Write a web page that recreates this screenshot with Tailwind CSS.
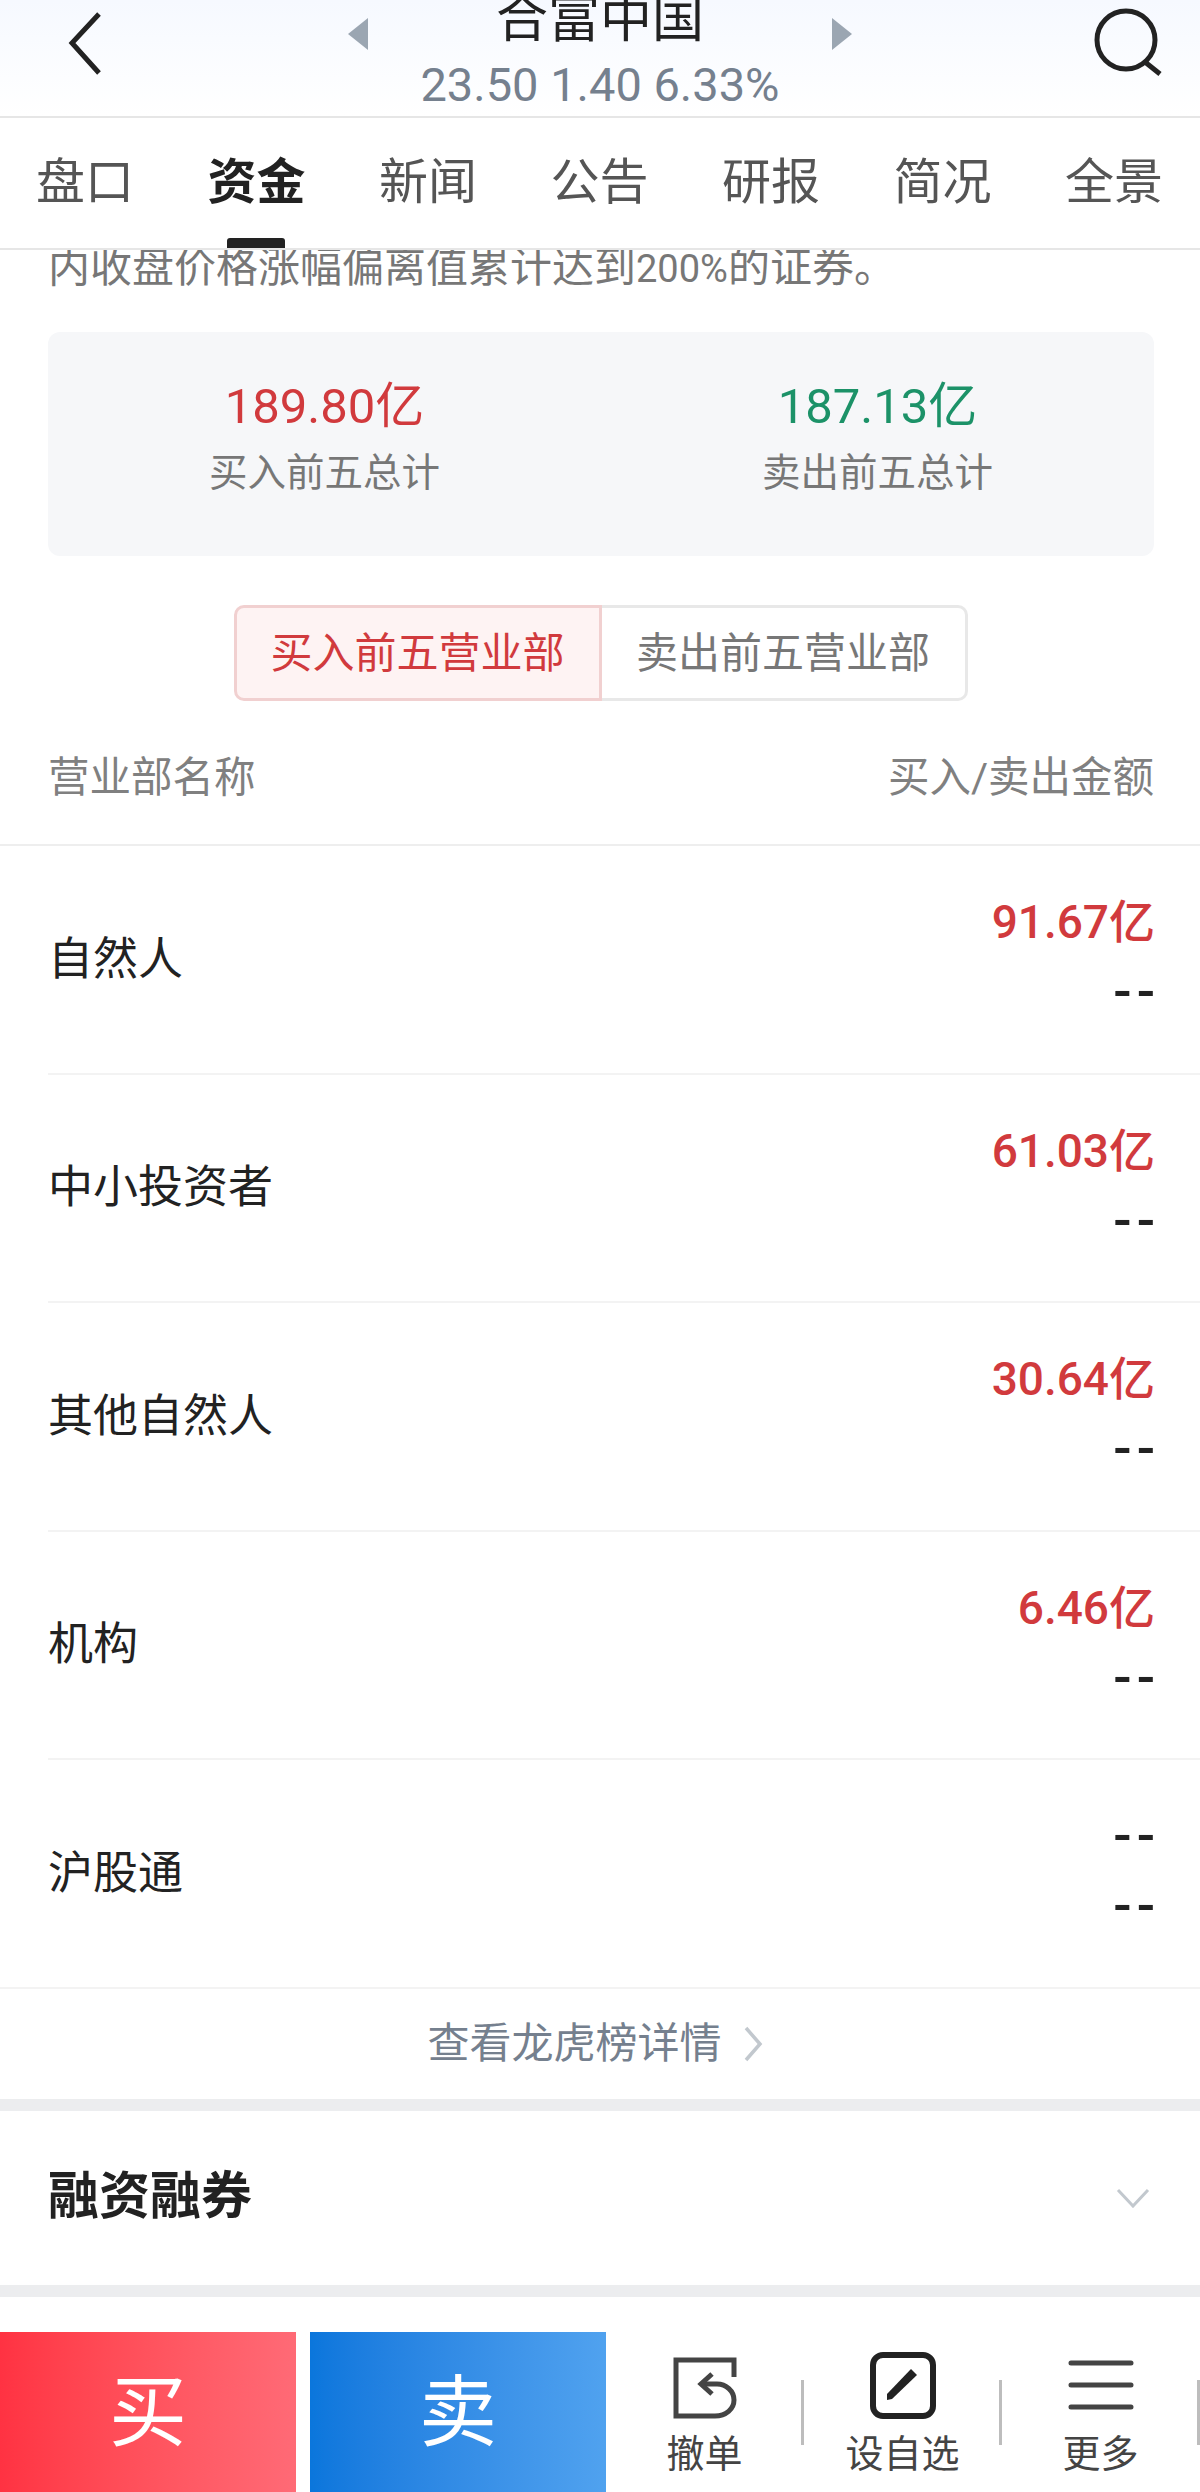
<!DOCTYPE html>
<html lang="zh-CN">
<head>
  <meta charset="UTF-8" />
  <title>合富中国</title>
  <script src="https://cdn.jsdelivr.net/npm/@tailwindcss/browser@4"></script>
</head>
<body class="bg-white font-['Roboto','Noto_Sans_CJK_SC',sans-serif]">
<div class="w-[1200px] h-[2492px] overflow-hidden flex flex-col">

  <!-- Header -->
  <header class="relative h-[118px] shrink-0 bg-gradient-to-b from-[#f6f9ff] to-white border-b-2 border-[#e6e6e6] overflow-hidden">
    <svg class="absolute left-[66px] top-[10px]" width="38" height="66" viewBox="0 0 38 66" fill="none" stroke="#222" stroke-width="5"><path d="M33 4L6 33L33 63"/></svg>
    <svg class="absolute left-[348px] top-[18px]" width="20" height="32" viewBox="0 0 20 32" fill="#9ba6b2"><path d="M20 0V32L0 16Z"/></svg>
    <div class="absolute left-0 right-0 top-[-6px] text-center text-[52px] leading-[52px] text-[#222]">合富中国</div>
    <div class="absolute left-0 right-0 top-[60px] text-center text-[47px] leading-[50px] text-[#75808e]">23.50 1.40 6.33%</div>
    <svg class="absolute left-[832px] top-[18px]" width="20" height="32" viewBox="0 0 20 32" fill="#9ba6b2"><path d="M0 0V32L20 16Z"/></svg>
    <svg class="absolute left-[1092px] top-[8px]" width="72" height="68" viewBox="0 0 72 68" fill="none" stroke="#222" stroke-width="5"><circle cx="34" cy="32" r="29"/><path d="M53 54L68 66"/></svg>
  </header>

  <!-- Tabs -->
  <nav class="relative h-[132px] shrink-0 flex items-center justify-between pl-[36px] pr-[37px] border-b-2 border-[#e6e6e6] text-[49px] leading-[60px] text-[#555]">
    <span>盘口</span>
    <span class="font-bold text-[#222]">资金</span>
    <span>新闻</span>
    <span>公告</span>
    <span>研报</span>
    <span>简况</span>
    <span>全景</span>
    <i class="absolute left-[227px] bottom-0 w-[58px] h-[10px] bg-[#222] rounded-t-[3px]"></i>
  </nav>

  <!-- Scrolled content -->
  <main class="flex-1 flex flex-col min-h-0">
    <p class="h-[38px] leading-[36px] px-[48px] text-[42px] text-[#777] whitespace-nowrap overflow-hidden">内收盘价格涨幅偏离值累计达到<span class="text-[38px]">200%</span>的证券。</p>

    <section class="mt-[44px] ml-[48px] mr-[46px] h-[224px] bg-[#f6f7f9] rounded-[12px] grid grid-cols-2 pt-[47px]">
      <div class="text-center">
        <div class="text-[49px] leading-[56px] text-[#d13a3d]">189.80亿</div>
        <div class="mt-[14px] text-[38.5px] leading-[48px] text-[#777]">买入前五总计</div>
      </div>
      <div class="text-center">
        <div class="text-[49px] leading-[56px] text-[#1c9268]">187.13亿</div>
        <div class="mt-[14px] text-[38.5px] leading-[48px] text-[#777]">卖出前五总计</div>
      </div>
    </section>

    <div class="mt-[49px] flex justify-center h-[96px] text-[42px] pl-[1px]">
      <div class="w-[368px] flex items-center justify-center bg-[#fef3f3] border-[3px] border-[#f1d0d0] rounded-l-[10px] text-[#d13a3d]">买入前五营业部</div>
      <div class="w-[366px] flex items-center justify-center border-[3px] border-l-0 border-[#e8e8e8] rounded-r-[10px] text-[#777]">卖出前五营业部</div>
    </div>

    <div class="h-[145px] pt-[11px] flex items-center justify-between pl-[48px] pr-[46px] text-[41.5px] text-[#808080] border-b-2 border-[#eee]">
      <span>营业部名称</span>
      <span>买入/卖出金额</span>
    </div>

    <!-- Rows -->
    <ul class="text-[45px] text-[#222]">
      <li class="ml-[48px] pr-[45px] h-[228.5px] flex items-center justify-between border-b-2 border-[#f3f3f3]">
        <span>自然人</span>
        <div class="text-right leading-[70px] -mt-[4px]"><div class="font-medium text-[46px] text-[#d13a3d]">91.67亿</div><div class="font-medium text-[54px] tracking-[5px] -mr-[5px] text-[#222]">--</div></div>
      </li>
      <li class="ml-[48px] pr-[45px] h-[228.5px] flex items-center justify-between border-b-2 border-[#f3f3f3]">
        <span>中小投资者</span>
        <div class="text-right leading-[70px] -mt-[4px]"><div class="font-medium text-[46px] text-[#d13a3d]">61.03亿</div><div class="font-medium text-[54px] tracking-[5px] -mr-[5px] text-[#222]">--</div></div>
      </li>
      <li class="ml-[48px] pr-[45px] h-[228.5px] flex items-center justify-between border-b-2 border-[#f3f3f3]">
        <span>其他自然人</span>
        <div class="text-right leading-[70px] -mt-[4px]"><div class="font-medium text-[46px] text-[#d13a3d]">30.64亿</div><div class="font-medium text-[54px] tracking-[5px] -mr-[5px] text-[#222]">--</div></div>
      </li>
      <li class="ml-[48px] pr-[45px] h-[228.5px] flex items-center justify-between border-b-2 border-[#f3f3f3]">
        <span>机构</span>
        <div class="text-right leading-[70px] -mt-[4px]"><div class="font-medium text-[46px] text-[#d13a3d]">6.46亿</div><div class="font-medium text-[54px] tracking-[5px] -mr-[5px] text-[#222]">--</div></div>
      </li>
      <li class="pl-[48px] pr-[45px] h-[228.5px] flex items-center justify-between border-b-2 border-[#f3f3f3]">
        <span>沪股通</span>
        <div class="text-right leading-[70px] -mt-[4px]"><div class="font-medium text-[54px] tracking-[5px] -mr-[5px] text-[#222]">--</div><div class="font-medium text-[54px] tracking-[5px] -mr-[5px] text-[#222]">--</div></div>
      </li>
    </ul>

    <a class="h-[110px] flex items-center justify-center gap-[21px] pr-[10px] text-[42px] text-[#75808e]">
      <span>查看龙虎榜详情</span>
      <svg width="20" height="36" viewBox="0 0 20 36" fill="none" stroke="#c2c8ce" stroke-width="3.5"><path d="M3 2L17 18L3 34"/></svg>
    </a>

    <div class="h-[198px] shrink-0 flex items-center justify-between border-y-[12px] border-[#ecedef] pl-[48px] pr-[50px]">
      <span class="text-[51px] font-bold text-[#222]">融资融券</span>
      <svg width="34" height="20" viewBox="0 0 34 20" fill="none" stroke="#c2c8ce" stroke-width="3"><path d="M2 2L17 18L32 2"/></svg>
    </div>
  </main>

  <!-- Bottom bar -->
  <footer class="h-[160px] shrink-0 flex">
    <button class="w-[296px] pt-[3px] flex items-center justify-center text-[78px] text-white bg-gradient-to-r from-[#ff3242] to-[#ff6a76]">买</button>
    <button class="ml-[14px] w-[296px] pt-[3px] flex items-center justify-center text-[78px] text-white bg-gradient-to-r from-[#0a76dc] to-[#50a2ef]">卖</button>

    <div class="w-[198px] flex">
      <div class="flex-1 pl-[2px] flex flex-col items-center pt-[25px] text-[38px] leading-[44px] text-[#444]">
        <svg class="ml-[2px]" width="66" height="62" viewBox="0 0 66 62" fill="none" stroke="#444" stroke-width="5"><path d="M61 20V3H3V59H42C53 59 61 52 61 43C61 34 53 27 44 27H28"/><path d="M39 17L28 27L39 37"/></svg>
        <span class="mt-[13px]">撤单</span>
      </div>
      <i class="w-[3px] h-[65px] mt-[48px] bg-[#bdbdbd]"></i>
    </div>
    <div class="w-[198px] flex">
      <div class="flex-1 pl-[2px] flex flex-col items-center pt-[20px] text-[38px] leading-[44px] text-[#444]">
        <svg width="66" height="67" viewBox="0 0 66 67" fill="#222" stroke="none"><rect x="3" y="3" width="60" height="61" rx="10" fill="none" stroke="#222" stroke-width="6"/><path d="M41 17L47 23L22 47L17 48V42Z"/></svg>
        <span class="mt-[13px]">设自选</span>
      </div>
      <i class="w-[3px] h-[65px] mt-[48px] bg-[#bdbdbd]"></i>
    </div>
    <div class="w-[198px] flex">
      <div class="flex-1 pl-[2px] flex flex-col items-center pt-[28px] text-[38px] leading-[44px] text-[#444]">
        <svg width="66" height="54" viewBox="0 0 66 54" fill="none" stroke="#444" stroke-width="5" stroke-linecap="round"><path d="M3 3H63M3 25H63M3 47H63"/></svg>
        <span class="mt-[18px]">更多</span>
      </div>
      <i class="w-[3px] h-[65px] mt-[48px] bg-[#bdbdbd]"></i>
    </div>
  </footer>
</div>
</body>
</html>
